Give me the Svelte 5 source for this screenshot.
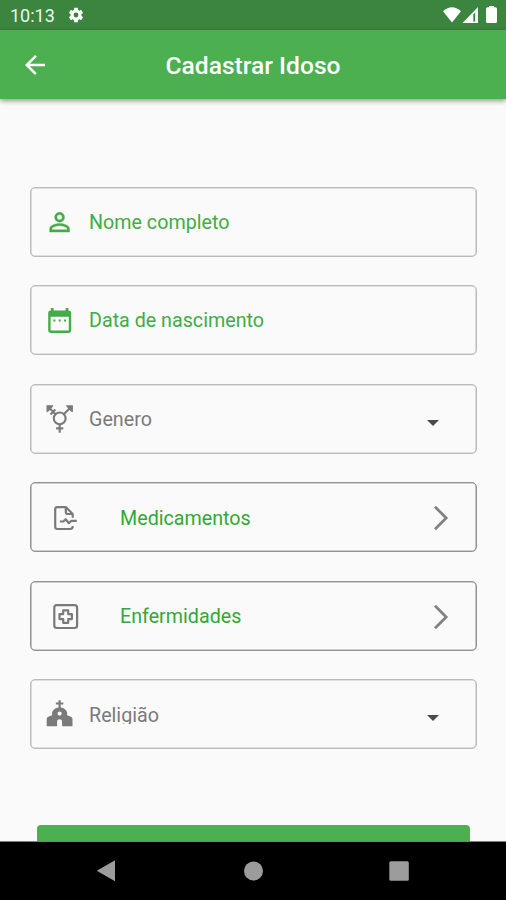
<script>
    const fields = [
        { icon: 'person', label: 'Nome completo', kind: 'input' },
        { icon: 'calendar', label: 'Data de nascimento', kind: 'input' },
        { icon: 'gender', label: 'Genero', kind: 'select' },
        { icon: 'file', label: 'Medicamentos', kind: 'link' },
        { icon: 'hospital', label: 'Enfermidades', kind: 'link' },
        { icon: 'church', label: 'Religião', kind: 'select' }
    ]
</script>

<div class="screen">
    <div class="status">
        <span class="time">10:13</span>
        <svg class="gear" width="18" height="18" viewBox="0 0 24 24">
            <path fill="#fff" d="M19.14 12.94c.04-.3.06-.61.06-.94s-.02-.64-.07-.94l2.03-1.58c.18-.14.23-.41.12-.61l-1.92-3.32c-.12-.22-.37-.29-.59-.22l-2.39.96c-.5-.38-1.03-.7-1.62-.94l-.36-2.54c-.04-.24-.24-.41-.48-.41h-3.84c-.24 0-.43.17-.47.41l-.36 2.54c-.59.24-1.13.57-1.62.94l-2.39-.96c-.22-.08-.47 0-.59.22L2.74 8.87c-.12.21-.08.47.12.61l2.03 1.58c-.05.3-.09.63-.09.94s.02.64.07.94l-2.03 1.58c-.18.14-.23.41-.12.61l1.92 3.32c.12.22.37.29.59.22l2.39-.96c.5.38 1.03.7 1.62.94l.36 2.54c.05.24.24.41.48.41h3.84c.24 0 .44-.17.47-.41l.36-2.54c.59-.24 1.13-.56 1.62-.94l2.39.96c.22.08.47 0 .59-.22l1.92-3.32c.12-.22.07-.47-.12-.61l-2.01-1.58zM12 15.2A3.2 3.2 0 1 1 12 8.8a3.2 3.2 0 0 1 0 6.4z" />
        </svg>
        <svg class="signals" width="58" height="20" viewBox="0 0 58 20">
            <path fill="#fff" d="M1 6.2Q10 -1.8 19 6.2L10 17.5Z" />
            <path fill="#fff" fill-rule="evenodd" d="M36 2V18H20.5ZM31.3 9.5V16.5H33.2V7.6Z" />
            <path fill="#fff" d="M47 2.2V1H52V2.2H53.5Q55 2.2 55 3.7V16.5Q55 18 53.5 18H45.5Q44 18 44 16.5V3.7Q44 2.2 45.5 2.2Z" />
        </svg>
    </div>

    <header>
        <svg width="30" height="30" viewBox="0 0 24 24">
            <path fill="#fff" d="M20 11H7.83l5.59-5.59L12 4l-8 8 8 8 1.41-1.41L7.83 13H20v-2z" />
        </svg>
        <h1>Cadastrar Idoso</h1>
    </header>

    <main>
        {#each fields as field}
            <div class="field {field.kind} {field.icon}">
                <svg class="icon" width="30" height="30" viewBox="0 0 30 30">
                    {#if field.icon === 'person'}
                        <path transform="translate(.7 .3) scale(1.24)" fill="currentColor" stroke="currentColor" stroke-width=".3" d="M12 5.9a2.1 2.1 0 1 1 0 4.2 2.1 2.1 0 0 1 0-4.2m0 9c2.97 0 6.1 1.46 6.1 2.1v1.1H5.9V17c0-.64 3.13-2.1 6.1-2.1M12 4a4 4 0 1 0 0 8 4 4 0 0 0 0-8zm0 9c-2.67 0-8 1.34-8 4v3h16v-3c0-2.66-5.33-4-8-4z" />
                    {:else if field.icon === 'calendar'}
                        <g transform="translate(.6 .6)" fill="currentColor">
                            <path fill-rule="evenodd" d="M6.2 2.5H9V5H21V2.5H23.8V5Q26.6 5 26.6 7.7V24.5Q26.6 27.3 24 27.3H6.3Q3.6 27.3 3.6 24.5V7.7Q3.6 5 6.2 5ZM6 11.2V25H24.2V11.2Z" />
                            <path d="M8.8 13.8h2v2h-2zM14.1 13.8h2v2h-2zM19.4 13.8h2v2h-2z" />
                        </g>
                    {:else if field.icon === 'gender'}
                        <g transform="translate(.5 0)" fill="none" stroke="currentColor" stroke-width="2.1">
                            <circle cx="15.2" cy="14.4" r="5.9" />
                            <path d="M19.3 10.3L27 2.6M11.1 10.3L3.4 2.6M6 10.4L10.8 5.6M15.2 20.2V28.7M11.6 24.4H18.8" />
                            <path fill="currentColor" stroke="none" d="M21.4 1.2H28.4V8.2L26.4 7.6L22.6 3.2ZM9 1.2H2V8.2L4 7.6L7.8 3.2Z" />
                        </g>
                    {:else if field.icon === 'file'}
                        <g transform="translate(0 .8)" fill="none" stroke="currentColor" stroke-width="2.2" stroke-linejoin="round">
                            <path d="M22.7 15V11.2L15.8 4.3H7.3Q5.2 4.3 5.2 6.4V24Q5.2 26.2 7.3 26.2H20.5Q22.7 26.2 22.7 23.2M15.8 4.3V9.2Q15.8 11.2 17.8 11.2H22.7" />
                            <path d="M9.8 18.7H13.5L15.6 16.5L18.9 20.4L21.1 18.1H26.8" />
                        </g>
                    {:else if field.icon === 'hospital'}
                        <g transform="translate(.5 .4)" fill="none" stroke="currentColor" stroke-width="2.2" stroke-linejoin="round">
                            <rect x="3.8" y="3.8" width="22.8" height="22.8" rx="2.5" />
                            <path d="M12.7 9H17.7V12.7H21.4V17.7H17.7V21.4H12.7V17.7H9V12.7H12.7Z" />
                        </g>
                    {:else}
                        <path transform="translate(.5 .2)" fill="currentColor" fill-rule="evenodd" d="M14 1H16.2V3.4H18.8V5.4H16.2V8.2Q21 9 22.6 13V16L26.5 17.6Q28 18.3 28 19.8V27H17.6V22.5Q17.6 20 15.1 20T12.6 22.5V27H2.2V19.8Q2.2 18.3 3.7 17.6L7.6 16V13Q9.2 9 14 8.2V5.4H11.4V3.4H14ZM15.1 12.3A2.1 2.1 0 1 0 15.1 16.5A2.1 2.1 0 1 0 15.1 12.3Z" />
                    {/if}
                </svg>
                <span class="label">{field.label}</span>
                {#if field.kind === 'select'}
                    <svg class="caret" width="12" height="6" viewBox="0 0 12 6">
                        <path fill="#4a4a4a" d="M0 0H12L6 6Z" />
                    </svg>
                {:else if field.kind === 'link'}
                    <svg class="chevron" width="16" height="26" viewBox="0 0 16 26">
                        <path fill="none" stroke="#808080" stroke-width="2.7" d="M2 1.8L13.2 13L2 24.2" />
                    </svg>
                {/if}
            </div>
        {/each}
        <div class="save"></div>
    </main>

    <nav>
        <svg width="506" height="58" viewBox="0 0 506 58">
            <g fill="#9c9c9c">
                <path d="M96.8 28.8L115 18.3V39.3Z" />
                <circle cx="253.5" cy="29" r="9.5" />
                <rect x="389.3" y="19.3" width="19.5" height="19.5" rx="1.5" />
            </g>
        </svg>
    </nav>
</div>

<style>
    :global(body) {
        background: #fafafa;
    }
    .screen {
        width: 506px;
        height: 900px;
        display: flex;
        flex-direction: column;
        overflow: hidden;
        background: #fafafa;
        font-family: Roboto, sans-serif;
    }
    .status {
        flex: none;
        height: 30px;
        box-sizing: border-box;
        padding: 0 6px 0 10px;
        display: flex;
        align-items: center;
        background: #3b853e;
        color: #eef5ee;
    }
    .time {
        width: 57px;
        padding-top: 2px;
        font-size: 18px;
        line-height: 28px;
    }
    .signals {
        margin-left: auto;
    }
    header {
        flex: none;
        height: 69px;
        display: grid;
        grid-template-columns: 86px 1fr 86px;
        align-items: center;
        background: #4caf50;
        box-shadow: 0 2px 5px rgba(0, 0, 0, 0.4);
    }
    header svg {
        margin-left: 20px;
    }
    h1 {
        margin: 2px 0 0;
        text-align: center;
        color: #fff;
        font-size: 24.6px;
        font-weight: 500;
        line-height: 30px;
    }
    main {
        flex: 1;
        min-height: 0;
        box-sizing: border-box;
        padding: 88px 29px 0 30px;
        display: flex;
        flex-direction: column;
        gap: 28.4px;
        overflow: hidden;
        border-bottom: 1px solid #808080;
    }
    .field {
        flex: none;
        height: 70px;
        box-sizing: border-box;
        padding-left: 13px;
        display: flex;
        align-items: center;
        border: 1px solid #bcbcbc;
        box-shadow: inset 0 0 0 0.6px #c4c4c4;
        border-radius: 5px;
        color: #7a7a7a;
    }
    .input {
        color: #43ab47;
    }
    .link {
        border-color: #939393;
        box-shadow: inset 0 0 0 0.6px #a0a0a0;
        padding-left: 19px;
    }
    .label {
        margin-left: 15px;
        padding-top: 2px;
        font-size: 19.7px;
        line-height: 24px;
    }
    .link .label {
        margin-left: 40px;
        padding-top: 3px;
        color: #32a836;
    }
    /* the dropdown label box is shorter than its line */
    .church .label {
        height: 20px;
        padding-top: 0;
        overflow: hidden;
    }
    .caret {
        margin: 8px 37px 0 auto;
    }
    .chevron {
        margin: 2px 27px 0 auto;
    }
    .save {
        flex: none;
        height: 60px;
        margin: 48px 7px 0;
        border-radius: 4px;
        background: #4caf50;
    }
    nav {
        flex: none;
        height: 58px;
        background: #000;
    }
    nav svg {
        display: block;
    }
</style>
